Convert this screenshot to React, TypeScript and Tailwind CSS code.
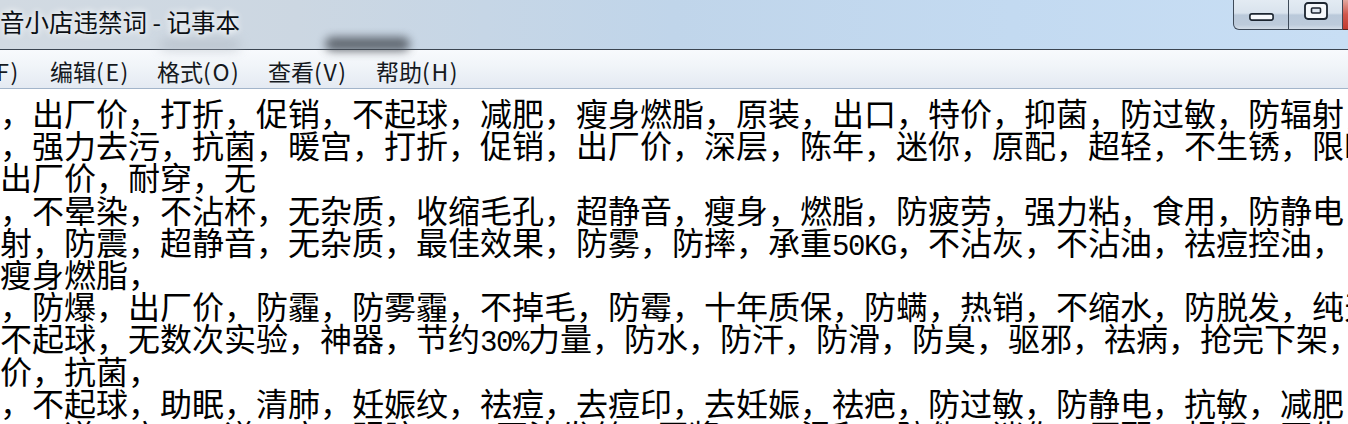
import React from "react";

const lines: string[] = [
  "，出厂价，打折，促销，不起球，减肥，瘦身燃脂，原装，出口，特价，抑菌，防过敏，防辐射，防紫外线",
  "，强力去污，抗菌，暖宫，打折，促销，出厂价，深层，陈年，迷你，原配，超轻，不生锈，限时",
  "出厂价，耐穿，无",
  "，不晕染，不沾杯，无杂质，收缩毛孔，超静音，瘦身，燃脂，防疲劳，强力粘，食用，防静电，防辐",
  "射，防震，超静音，无杂质，最佳效果，防雾，防摔，承重50KG，不沾灰，不沾油，祛痘控油，",
  "瘦身燃脂，",
  "，防爆，出厂价，防霾，防雾霾，不掉毛，防霉，十年质保，防螨，热销，不缩水，防脱发，纯天然",
  "不起球，无数次实验，神器，节约30%力量，防水，防汗，防滑，防臭，驱邪，祛病，抢完下架，",
  "价，抗菌，",
  "，不起球，助眠，清肺，妊娠纹，祛痘，去痘印，去妊娠，祛疤，防过敏，防静电，抗敏，减肥",
  "，30道工序，30道工序，明胶10%，不沾发丝，原浆75%，温和，防伪，迷你，原配，超轻，不生锈",
];

function Line({ text }: { text: string }) {
  const parts = text.split(/([\x00-\x7F]+)/).filter((p) => p.length > 0);
  return (
    <div className="h-[32.2px] leading-[32.2px] whitespace-nowrap">
      {parts.map((p, i) =>
        /^[\x00-\x7F]+$/.test(p) ? (
          <span key={i} className="font-['Liberation_Mono',monospace] text-[29px] tracking-[-1.4px]">
            {p}
          </span>
        ) : (
          <span key={i}>{p}</span>
        )
      )}
    </div>
  );
}

function MenuItem({ label, keyChar, width }: { label: string; keyChar: string; width: string }) {
  return (
    <span className={`whitespace-nowrap ${width}`}>
      {label}
      <span className="tracking-[1.6px]">({keyChar})</span>
    </span>
  );
}

export default function App() {
  return (
    <div className="w-[1348px] h-[424px] overflow-hidden bg-white flex flex-col font-['Noto_Sans_CJK_SC',sans-serif]">
      {/* Title bar */}
      <div className="relative h-[50px] shrink-0 flex items-start border-b border-[#3b4551] bg-[linear-gradient(to_right,#d2dae2_0%,#ccd7e2_22%,#c0d5ea_50%,#c3daf1_75%,#c8def4_100%)]">
        <div className="absolute left-[325px] top-[37px] w-[85px] h-[14px] rounded-full bg-[#454b53] blur-[5px] opacity-80" />
        <div className="absolute left-[160px] top-[40px] w-[80px] h-[10px] rounded-full bg-[#aab3bd] blur-[6px] opacity-60" />
        <div className="relative flex-1 pt-[7px] text-[24.5px] leading-[30px] text-[#0c1014] [text-shadow:0_0_6px_rgba(255,255,255,0.95),0_0_10px_rgba(255,255,255,0.7)]">
          音小店违禁词 - 记事本
        </div>
        <div className="relative flex h-[30px] shrink-0">
          <div className="w-[56px] h-full border-l border-b border-r border-[#3e4a59] rounded-bl-[6px] flex justify-center pt-[13px] bg-[linear-gradient(to_bottom,#e3ebf3_0%,#d9e3ed_45%,#bac9da_52%,#bdcbdb_85%,#d3dde8_100%)]">
            <svg width="25" height="8" viewBox="0 0 25 8">
              <rect x="0.9" y="0.9" width="23.2" height="6.2" rx="2" fill="#f7f9fc" stroke="#1c2530" strokeWidth="1.6" />
            </svg>
          </div>
          <div className="w-[54px] h-full border-b border-r border-[#3e4a59] flex justify-center pt-[2px] bg-[linear-gradient(to_bottom,#e3ebf3_0%,#d9e3ed_45%,#bac9da_52%,#bdcbdb_85%,#d3dde8_100%)]">
            <svg width="24" height="18" viewBox="0 0 24 18">
              <rect x="1" y="1" width="22" height="16" rx="3" fill="#f5f8fb" stroke="#1c2530" strokeWidth="1.8" />
              <rect x="7.5" y="6" width="9" height="5" rx="1" fill="#dfe7f0" stroke="#1c2530" strokeWidth="1.6" />
            </svg>
          </div>
          <div className="w-[5px] h-full border-b border-[#5a2420] bg-[linear-gradient(to_bottom,#e3a79f_0%,#d0574c_50%,#c23b30_100%)]" />
        </div>
      </div>

      {/* Menu bar */}
      <div className="h-[39px] shrink-0 flex items-center gap-[30px] pt-[4px] border-b border-[#a3b5ca] bg-[linear-gradient(to_bottom,#f8fafd_0%,#f1f5f9_40%,#e4eaf2_100%)] text-[23px] leading-[30px] text-[#15191e]">
        <div className="w-[20px] overflow-hidden flex justify-end">
          <span className="whitespace-nowrap">
            文件<span className="tracking-[1.6px]">(F)</span>
          </span>
        </div>
        <MenuItem label="编辑" keyChar="E" width="w-[77px]" />
        <MenuItem label="格式" keyChar="O" width="w-[81px]" />
        <MenuItem label="查看" keyChar="V" width="w-[78px]" />
        <MenuItem label="帮助" keyChar="H" width="w-[80px]" />
      </div>

      {/* Text area */}
      <div className="flex-1 overflow-hidden bg-white pt-[7px] text-[32px] text-black">
        {lines.map((l, i) => (
          <Line key={i} text={l} />
        ))}
      </div>
    </div>
  );
}
